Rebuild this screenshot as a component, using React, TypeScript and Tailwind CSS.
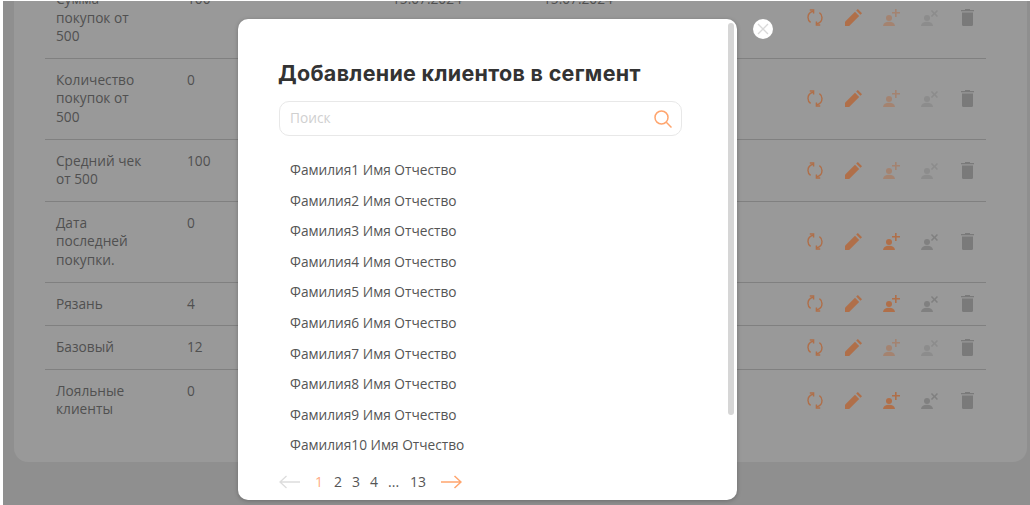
const rows = [
  { name: "Сумма покупок от 500", count: "100", from: "15.07.2024", to: "15.07.2024", add: false, remove: false },
  { name: "Количество покупок от 500", count: "0", add: false, remove: false },
  { name: "Средний чек от 500", count: "100", add: false, remove: false },
  { name: "Дата последней покупки.", count: "0", add: true, remove: true },
  { name: "Рязань", count: "4", add: true, remove: true },
  { name: "Базовый", count: "12", add: false, remove: false },
  { name: "Лояльные клиенты", count: "0", add: true, remove: true },
];

const clients = ["Фамилия1", "Фамилия2", "Фамилия3", "Фамилия4", "Фамилия5", "Фамилия6", "Фамилия7", "Фамилия8", "Фамилия9", "Фамилия10"];

function RefreshIcon() {
  return (
    <svg width="16" height="17" viewBox="0 0 16 17" fill="none" stroke="#b06f49" strokeWidth="1.4">
      <path d="M6 2.300C3.100 3 1 5.500 1 8.500c0 2 1 3.800 2.600 4.900" />
      <path d="M10 14.700c2.900-.7 5-3.200 5-6.200 0-2-1-3.800-2.600-4.900" />
      <path d="M2.800 1h3.800v3.400" />
      <path d="M13.200 16H9.400v-3.400" />
    </svg>
  );
}

function PencilIcon() {
  return (
    <svg width="17" height="17" viewBox="0 0 17 17" fill="#b06f49">
      <path d="M0 17v-4.200L10 2.800 14.200 7 4.200 17z" />
      <path d="M11.200 1.600 12.800 0 17 4.200 15.400 5.800z" />
    </svg>
  );
}

function PersonPlusIcon({ active }: { active: boolean }) {
  return (
    <svg width="17" height="17" viewBox="0 0 17 17" fill="#b06f49" className={active ? "" : "opacity-50"}>
      <circle cx="6" cy="9" r="3" />
      <path d="M0 17c.3-2.800 2.800-4.200 6-4.200s5.700 1.400 6 4.200z" />
      <path d="M12 0h1.600v3H17v1.600h-3.400V8H12V4.600H9V3h3z" />
    </svg>
  );
}

function PersonCrossIcon({ active }: { active: boolean }) {
  return (
    <svg width="17" height="17" viewBox="0 0 17 17" fill="#808080" className={active ? "" : "opacity-50"}>
      <circle cx="6" cy="9" r="3" />
      <path d="M11 1l2.500 2.400L15.900 1 17 2.100l-2.400 2.400L17 6.900 15.900 8l-2.400-2.400L11 8 9.900 6.900l2.500-2.400L9.900 2.100z" />
      <path d="M0 17c.3-2.800 2.800-4.200 6-4.200s5.700 1.400 6 4.200z" />
    </svg>
  );
}

function TrashIcon() {
  return (
    <svg width="13" height="17" viewBox="0 0 13 17" fill="#7a7a7a">
      <path d="M4 0h5v1h4v1.200H0V1h4z" />
      <path d="M1 3.400h11V15.500A1.500 1.500 0 0 1 10.500 17h-8A1.500 1.500 0 0 1 1 15.500z" />
    </svg>
  );
}

function Row({ row, last }: { row: (typeof rows)[number]; last: boolean }) {
  return (
    <div className={`flex items-center py-3 ${last ? "" : "border-b border-[#808080]"}`}>
      <div className="ml-[11px] mr-[40px] w-[91px] self-start">{row.name}</div>
      <div className="w-[205px] self-start">{row.count}</div>
      <div className="w-[151px] self-start">{row.from}</div>
      <div className="w-[253px] self-start">{row.to}</div>
      <div className="flex">
        <div className="flex w-[38px] justify-center"><RefreshIcon /></div>
        <div className="flex w-[38px] justify-center"><PencilIcon /></div>
        <div className="flex w-[38px] justify-center"><PersonPlusIcon active={row.add} /></div>
        <div className="flex w-[38px] justify-center"><PersonCrossIcon active={row.remove} /></div>
        <div className="flex w-[38px] justify-center"><TrashIcon /></div>
      </div>
    </div>
  );
}

export default function App() {
  return (
    <div className="h-[505px] w-[1030px] overflow-hidden bg-white pl-[3px] pt-px font-['Open_Sans',sans-serif] text-[13.7px] leading-[18.6px]">
      <div className="relative h-full overflow-hidden bg-[#8f8f8f]">
        <div className="ml-[11px] mr-[3px] -mt-[29px] h-[490px] rounded-[14px] bg-[#999999] pl-[31px] pr-[41px] pt-[6px] text-[#505050]">
          {rows.map((row, i) => (
            <Row key={row.name} row={row} last={i === rows.length - 1} />
          ))}
        </div>

        <button className="absolute left-[750px] top-[18px] flex h-5 w-5 items-center justify-center rounded-full bg-white">
          <svg width="12" height="12" viewBox="0 0 12 12" stroke="#d9d9d9" strokeWidth="1.300">
            <path d="M1 1l10 10M11 1 1 11" />
          </svg>
        </button>

        <div className="absolute left-[235px] top-[18px] flex h-[481px] w-[499px] flex-col rounded-[10px] bg-white pl-[41px] pr-[55px] pt-[39px] shadow-[0_1px_4px_rgba(0,0,0,0.25)]">
          <div className="absolute bottom-[85px] right-[3px] top-1 w-[6px] rounded-full bg-[#d6d6d6]" />
          <h2 className="-ml-px text-[21.5px] font-bold leading-[30px] tracking-[0.3px] text-[#333333] font-['Inter',sans-serif]">
            Добавление клиентов в сегмент
          </h2>
          <div className="mt-[13px] flex h-[35px] items-center justify-between rounded-[10px] border border-[#e8e8e8] pl-[10px] pr-[9px] text-[#d0d0d0]">
            <span>Поиск</span>
            <svg width="18" height="18" viewBox="0 0 18 18" fill="none" stroke="#ffa56e" strokeWidth="1.500">
              <circle cx="7.500" cy="7.500" r="6.500" />
              <path d="M12.300 12.300 17.500 17.500" />
            </svg>
          </div>
          <ul className="mt-[19px] flex flex-col pl-[11px] text-[#555555]">
            {clients.map((c) => (
              <li key={c} className="flex h-[30.6px] items-center">{c} Имя Отчество</li>
            ))}
          </ul>
          <div className="mt-3 flex items-center text-[14px] text-[#555555]">
            <svg width="21" height="14" viewBox="0 0 21 14" fill="none" stroke="#dddddd" strokeWidth="1.300">
              <path d="M21 7H1M7.500 1 1 7l6.500 6" />
            </svg>
            <span className="ml-[15px] text-[#ffab85]">1</span>
            <span className="ml-[11px]">2</span>
            <span className="ml-[10px]">3</span>
            <span className="ml-[10px]">4</span>
            <span className="ml-[10px]">...</span>
            <span className="ml-[11px]">13</span>
            <svg className="ml-[15px]" width="21" height="14" viewBox="0 0 21 14" fill="none" stroke="#ffa56e" strokeWidth="1.500">
              <path d="M0 7h20M13.500 1 20 7l-6.500 6" />
            </svg>
          </div>
        </div>
      </div>
    </div>
  );
}
